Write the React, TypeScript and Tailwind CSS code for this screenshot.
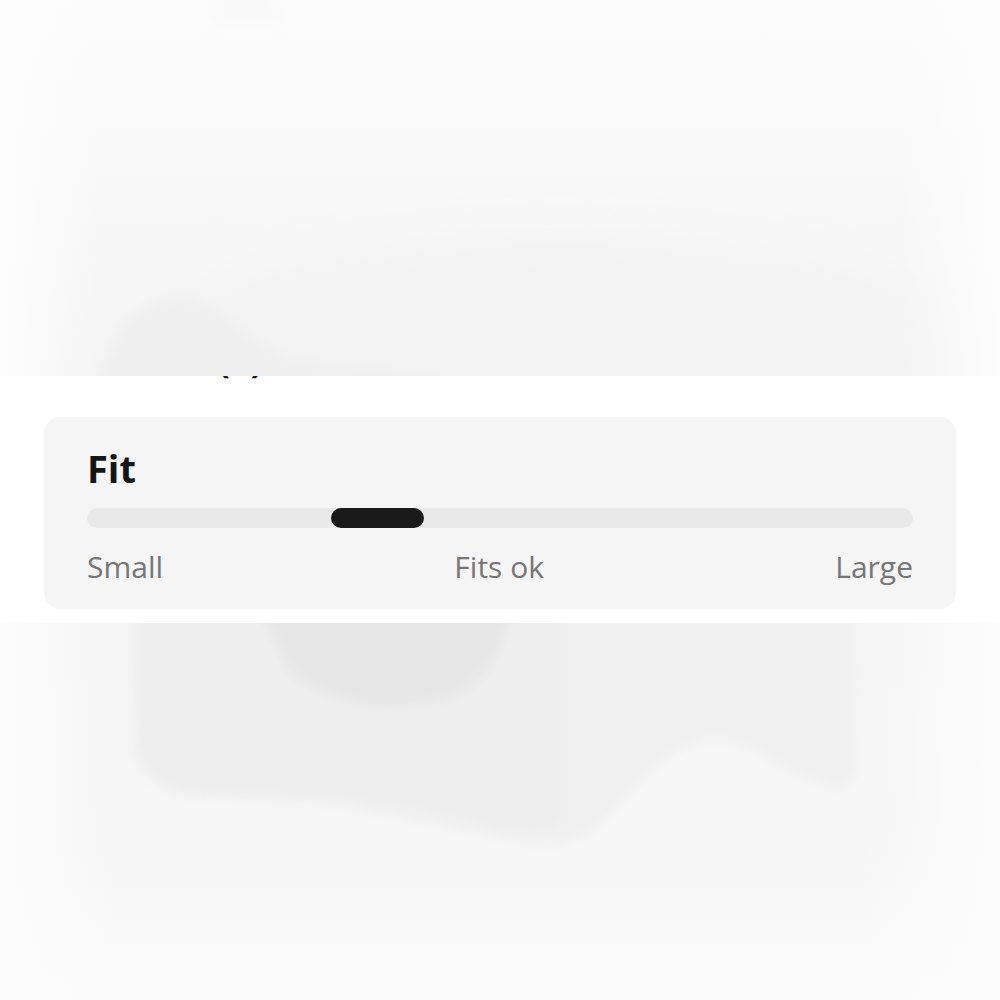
import React from "react";

function TopBackdrop() {
  return (
    <svg width="1000" height="376" viewBox="0 0 1000 376" className="block" aria-hidden>
      <defs>
        <filter id="softTop" x="-20%" y="-20%" width="140%" height="140%">
          <feGaussianBlur stdDeviation="6" />
        </filter>
        <filter id="hazeTop" x="-20%" y="-20%" width="140%" height="140%">
          <feGaussianBlur stdDeviation="30" />
        </filter>
        <linearGradient id="topFade" x1="0" y1="0" x2="0" y2="1">
          <stop offset="0" stopColor="#fcfcfc" />
          <stop offset="0.5" stopColor="#f8f8f8" />
          <stop offset="1" stopColor="#f4f4f4" />
        </linearGradient>
        <linearGradient id="topSides" x1="0" y1="0" x2="1" y2="0">
          <stop offset="0" stopColor="#fdfdfd" stopOpacity="1" />
          <stop offset="0.1" stopColor="#fdfdfd" stopOpacity="0" />
          <stop offset="0.9" stopColor="#fdfdfd" stopOpacity="0" />
          <stop offset="1" stopColor="#fdfdfd" stopOpacity="1" />
        </linearGradient>
      </defs>
      <rect width="1000" height="376" fill="url(#topFade)" />
      <g filter="url(#hazeTop)">
        <ellipse cx="560" cy="380" rx="420" ry="140" fill="#f3f3f3" />
      </g>
      <g filter="url(#softTop)">
        <path d="M92 390 L120 330 Q150 295 185 298 Q215 305 240 330 L290 362 L440 378 L440 390 Z" fill="#f0f0f0" />
        <rect x="210" y="-10" width="70" height="34" rx="8" fill="#f9f9f9" />
      </g>
      <rect width="1000" height="376" fill="url(#topSides)" />
    </svg>
  );
}

function BottomBackdrop() {
  return (
    <svg width="1000" height="377" viewBox="0 0 1000 377" className="block" aria-hidden>
      <defs>
        <filter id="softBottom" x="-20%" y="-20%" width="140%" height="140%">
          <feGaussianBlur stdDeviation="5" />
        </filter>
        <linearGradient id="bottomFade" x1="0" y1="0" x2="0" y2="1">
          <stop offset="0" stopColor="#f5f5f5" />
          <stop offset="0.6" stopColor="#f6f6f6" />
          <stop offset="1" stopColor="#fbfbfb" />
        </linearGradient>
        <linearGradient id="bottomSides" x1="0" y1="0" x2="1" y2="0">
          <stop offset="0" stopColor="#fcfcfc" stopOpacity="1" />
          <stop offset="0.12" stopColor="#fcfcfc" stopOpacity="0" />
          <stop offset="0.86" stopColor="#fcfcfc" stopOpacity="0" />
          <stop offset="1" stopColor="#fcfcfc" stopOpacity="1" />
        </linearGradient>
      </defs>
      <rect width="1000" height="377" fill="url(#bottomFade)" />
      <g filter="url(#softBottom)">
        <path
          d="M134 -10 L855 -10 L855 150 Q850 170 820 160 Q790 150 770 135 Q730 110 700 118 Q660 130 620 180 Q580 230 530 220 Q430 200 330 180 L190 172 Q140 165 136 120 Z"
          fill="#f1f1f1"
        />
        <path
          d="M134 -10 L560 -10 L560 200 Q530 215 480 200 Q400 180 330 175 L190 170 Q140 165 136 120 Z"
          fill="#eeeeee"
        />
        <path d="M262 -10 L510 -10 Q495 70 430 80 L390 83 Q330 82 290 50 Z" fill="#e6e6e6" />
      </g>
      <rect x="0" y="0" width="1000" height="377" fill="url(#bottomSides)" />
    </svg>
  );
}

export default function App() {
  const position = 0.295;
  return (
    <div
      className="w-[1000px] h-[1000px] overflow-hidden bg-white flex flex-col"
      style={{ fontFamily: '"Open Sans", "Noto Sans", sans-serif' }}
    >
      <TopBackdrop />
      <section className="relative h-[247px] bg-white overflow-hidden">
        <p className="absolute left-[62px] top-[-39px] whitespace-nowrap text-[36px] font-bold leading-[46px] text-[#1a1a1a]">
          Reviews (3)
        </p>
        <div className="mx-[44px] mt-[41px] h-[192px] rounded-[16px] bg-[#f5f5f5] px-[43px] pt-[28px]">
          <h3 className="text-[38px] font-bold leading-[46px] text-[#151515]">Fit</h3>
          <div className="relative mt-[17px] h-[20px] rounded-full bg-[#e9e9e9]">
            <div
              className="absolute top-0 h-[20px] w-[93px] rounded-full bg-[#1a1a1a]"
              style={{ left: `${position * 100}%` }}
            />
          </div>
          <div className="mt-[19px] flex justify-between text-[30px] leading-[40px] text-[#767676]">
            <span>Small</span>
            <span>Fits ok</span>
            <span>Large</span>
          </div>
        </div>
      </section>
      <BottomBackdrop />
    </div>
  );
}
